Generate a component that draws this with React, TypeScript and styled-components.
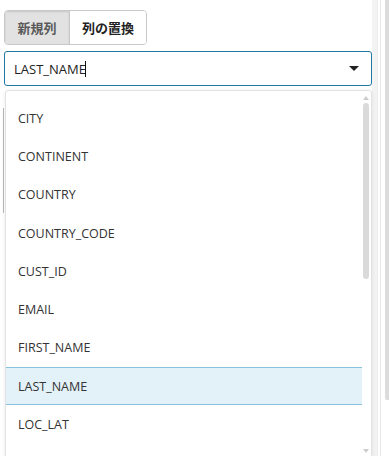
import styled, { createGlobalStyle } from 'styled-components';

const GlobalStyle = createGlobalStyle`
	html, body {
		margin: 0;
		padding: 0;
		background: #fff;
	}
	body {
		font-family: 'Open Sans', 'Noto Sans CJK JP', sans-serif;
		color: #333;
	}
	* {
		box-sizing: border-box;
	}
`;

const columns = [
	'CITY',
	'CONTINENT',
	'COUNTRY',
	'COUNTRY_CODE',
	'CUST_ID',
	'EMAIL',
	'FIRST_NAME',
	'LAST_NAME',
	'LOC_LAT',
];

const selected = 'LAST_NAME';

function App() {
	return (
		<>
			<GlobalStyle />
			<Page>
				<Main>
					<Segmented>
						<SegButton $active>新規列</SegButton>
						<SegButton>列の置換</SegButton>
					</Segmented>
					<SelectWrap>
						<SelectBox>
							<SelectText>
								{selected}
								<Caret />
							</SelectText>
							<Arrow />
						</SelectBox>
						<Menu>
							<MenuList>
								{columns.map((c) => (
									<MenuItem key={c} $selected={c === selected}>
										{c}
									</MenuItem>
								))}
							</MenuList>
							<MenuScroll>
								<ScrollArrow />
								<ScrollThumb />
								<ScrollArrow $down />
							</MenuScroll>
						</Menu>
						<BackPanel />
					</SelectWrap>
				</Main>
				<Gutter>
					<GutterStrip />
					<GutterLine />
					<GutterThumb />
				</Gutter>
			</Page>
		</>
	);
}

const Page = styled.div`
	display: flex;
	width: 390px;
	height: 456px;
	overflow: hidden;
`;

const Main = styled.div`
	width: 372px;
	padding: 10px 0 0 4px;
	display: flex;
	flex-direction: column;
	gap: 6px;
`;

const Segmented = styled.div`
	display: flex;
	align-self: flex-start;
	border: 1px solid #c8c8c8;
	border-radius: 4px;
	overflow: hidden;
	height: 35px;
`;

const SegButton = styled.div<{ $active?: boolean }>`
	display: flex;
	align-items: center;
	justify-content: center;
	width: ${(p) => (p.$active ? '64px' : '77px')};
	font-family: 'Noto Sans CJK JP', sans-serif;
	font-size: 13px;
	font-weight: 700;
	color: ${(p) => (p.$active ? '#5a5a5a' : '#222')};
	background: ${(p) => (p.$active ? '#e2e2e2' : '#fff')};
	box-shadow: ${(p) => (p.$active ? 'inset 0 1px 2px rgba(0,0,0,0.12)' : 'none')};
	& + & {
		border-left: 1px solid #c8c8c8;
	}
`;

const SelectWrap = styled.div`
	position: relative;
	display: flex;
	flex-direction: column;
`;

const SelectBox = styled.div`
	height: 35px;
	border: 1px solid #1f78a4;
	border-radius: 3px;
	display: flex;
	align-items: center;
	justify-content: space-between;
	padding: 0 12px 0 9px;
`;

const SelectText = styled.div`
	display: flex;
	align-items: center;
	font-size: 13px;
	color: #222;
`;

const Caret = styled.span`
	display: inline-block;
	width: 1px;
	height: 16px;
	background: #111;
	margin-left: -1px;
`;

const Arrow = styled.span`
	width: 0;
	height: 0;
	border-left: 5px solid transparent;
	border-right: 5px solid transparent;
	border-top: 5px solid #222;
`;

const BackPanel = styled.div`
	height: 105px;
	margin-top: 22px;
	border-left: 1px solid #b8b8b8;
	margin-left: -1px;
`;

const Menu = styled.div`
	position: absolute;
	top: 39px;
	left: 1px;
	right: 0;
	height: 370px;
	background: #fff;
	border: 1px solid #e2e2e2;
	border-radius: 3px;
	box-shadow: 0 1px 4px rgba(0, 0, 0, 0.08);
	display: flex;
	z-index: 2;
`;

const MenuList = styled.div`
	flex: 1;
	padding-top: 8px;
	display: flex;
	flex-direction: column;
`;

const MenuItem = styled.div<{ $selected?: boolean }>`
	height: 38.3px;
	flex-shrink: 0;
	display: flex;
	align-items: center;
	padding-left: 12px;
	font-size: 12.5px;
	color: #333;
	background: ${(p) => (p.$selected ? '#e3f1f8' : 'transparent')};
	border-top: 1px solid ${(p) => (p.$selected ? '#86c2da' : 'transparent')};
	border-bottom: 1px solid ${(p) => (p.$selected ? '#86c2da' : 'transparent')};
`;

const MenuScroll = styled.div`
	width: 9px;
	padding: 5px 2px 6px 0;
	display: flex;
	flex-direction: column;
	align-items: center;
	gap: 3px;
`;

const ScrollArrow = styled.span<{ $down?: boolean }>`
	width: 0;
	height: 0;
	border-left: 3px solid transparent;
	border-right: 3px solid transparent;
	${(p) => (p.$down ? 'border-top: 4px solid #ccc; margin-top: auto;' : 'border-bottom: 4px solid #ccc;')}
`;

const ScrollThumb = styled.div`
	width: 6px;
	height: 176px;
	background: #dadada;
	border-radius: 3px;
`;

const Gutter = styled.div`
	flex: 1;
	display: flex;
	height: 456px;
`;

const GutterStrip = styled.div`
	width: 6px;
	background: #f3f3f3;
	border-right: 1px solid #ececec;
`;

const GutterLine = styled.div`
	width: 3px;
	border-right: 1px solid #e6e6e6;
	margin-right: 4px;
`;

const GutterThumb = styled.div`
	width: 4px;
	height: 400px;
	background: #dcdcdc;
	border-radius: 0 0 0 2px;
`;

export default App;
